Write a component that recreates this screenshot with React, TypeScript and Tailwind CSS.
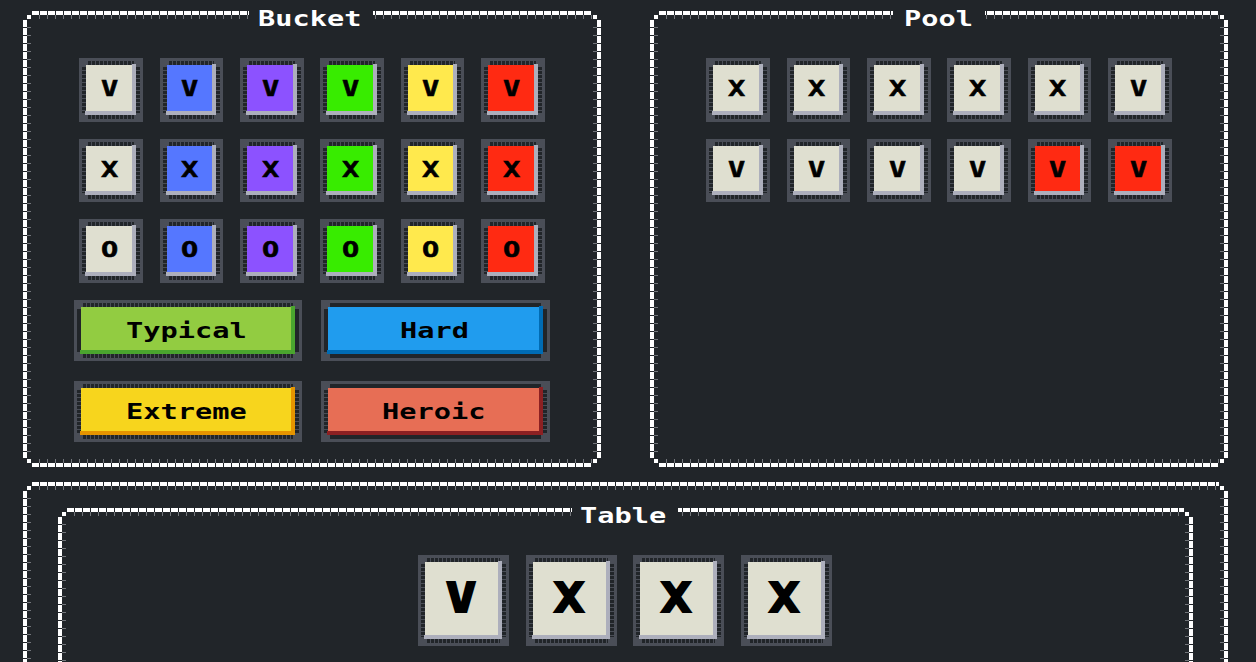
import type { ReactNode } from "react";

const mono = "font-['DejaVu_Sans_Mono',monospace] font-bold";

const faces: Record<string, string> = {
  white: "bg-[#dfdfd0]",
  blue: "bg-[#5577ff]",
  purple: "bg-[#8c52ff]",
  green: "bg-[#38ec00]",
  yellow: "bg-[#ffe94d]",
  red: "bg-[#ff2a12]",
};

const colors = ["white", "blue", "purple", "green", "yellow", "red"];

function HEdge() {
  return (
    <div className="absolute left-[9px] right-[9px] top-0 h-[8px]">
      <div className="h-[4px] bg-[repeating-linear-gradient(90deg,#ffffff_0_7px,#212529_7px_8px)]" />
      <div className="h-[4px] bg-[repeating-linear-gradient(90deg,transparent_0_7px,#73767b_7px_8px)]" />
    </div>
  );
}

function HEdgeBottom() {
  return (
    <div className="absolute left-[9px] right-[9px] bottom-0 h-[8px]">
      <div className="h-[4px] bg-[repeating-linear-gradient(90deg,transparent_0_7px,#73767b_7px_8px)]" />
      <div className="h-[4px] bg-[repeating-linear-gradient(90deg,#ffffff_0_7px,#212529_7px_8px)]" />
    </div>
  );
}

function VEdge({ side }: { side: "left" | "right" }) {
  return (
    <div className={`absolute top-[9px] bottom-[9px] w-[8px] flex ${side === "left" ? "left-0" : "right-0 flex-row-reverse"}`}>
      <div className="w-[4px] bg-[repeating-linear-gradient(180deg,#ffffff_0_7px,#212529_7px_8px)]" />
      <div className="w-[4px] bg-[repeating-linear-gradient(180deg,transparent_0_7px,#73767b_7px_8px)]" />
    </div>
  );
}

function Frame({ title, gapClass, className, children }: { title?: string; gapClass?: string; className: string; children: ReactNode }) {
  return (
    <div className={`relative ${className}`}>
      <HEdge />
      <HEdgeBottom />
      <VEdge side="left" />
      <VEdge side="right" />
      <div className="absolute left-[4px] top-[4px] size-[4px] bg-white" />
      <div className="absolute right-[4px] top-[4px] size-[4px] bg-white" />
      <div className="absolute left-[4px] bottom-[4px] size-[4px] bg-white" />
      <div className="absolute right-[4px] bottom-[4px] size-[4px] bg-white" />
      {title && (
        <div className="absolute -top-[4px] left-0 right-0 flex justify-center">
          <span className={`bg-[#212529] h-[16px] flex items-center justify-center text-white text-[22px] leading-none ${mono} ${gapClass}`}>
            <span className="mt-[8px] -ml-[2px] inline-block scale-x-[1.3]">{title}</span>
          </span>
        </div>
      )}
      {children}
    </div>
  );
}

const studsH = "bg-[repeating-linear-gradient(90deg,#212529_0_3px,#4a4e57_3px_4px)]";
const studsV = "bg-[repeating-linear-gradient(180deg,#212529_0_3px,#4a4e57_3px_4px)]";

// studded ring round a tile or a button, some of the strips come out solid
function Ring({ className, solidTop, solidSides, children }: { className: string; solidTop?: boolean; solidSides?: boolean; children: ReactNode }) {
  const top = solidTop ? "bg-[#212529]" : studsH;
  const side = solidSides ? "bg-[#212529]" : studsV;
  return (
    <div className={`relative bg-[#4a4e57] p-[7px] ${className}`}>
      <div className={`absolute left-[9px] right-[9px] top-[3px] h-[4px] ${top}`} />
      <div className={`absolute left-[9px] right-[9px] bottom-[3px] h-[4px] ${top}`} />
      <div className={`absolute left-[3px] top-[9px] bottom-[9px] w-[4px] ${side}`} />
      <div className={`absolute right-[3px] top-[9px] bottom-[9px] w-[4px] ${side}`} />
      {children}
    </div>
  );
}

function Shaded({ face, shade, children }: { face: string; shade: string; children: ReactNode }) {
  return (
    <div className={`relative size-full flex items-center justify-center ${face}`}>
      <div className={`absolute right-0 -top-[1px] bottom-0 w-[4px] ${shade}`} />
      <div className={`absolute -left-[1px] right-0 bottom-0 h-[4px] ${shade}`} />
      {children}
    </div>
  );
}

function Tile({ glyph, color = "white" }: { glyph: string; color?: string }) {
  return (
    <Ring className="size-[63.6px]">
      <Shaded face={faces[color]} shade="bg-[#adafbc]">
        <span className={`-mt-[1px] -ml-[3px] inline-block scale-x-[1.3] text-[22px] leading-none text-black [-webkit-text-stroke:0.5px_black] ${mono}`}>{glyph}</span>
      </Shaded>
    </Ring>
  );
}

function BigTile({ glyph }: { glyph: string }) {
  return (
    <Ring className="size-[91px]">
      <Shaded face={faces.white} shade="bg-[#adafbc]">
        <span className={`-mt-[6px] -ml-[4px] inline-block scale-x-[1.25] text-[40px] leading-none text-black [-webkit-text-stroke:2px_black] ${mono}`}>{glyph}</span>
      </Shaded>
    </Ring>
  );
}

function LevelButton({ label, width, face, shade, solidTop, solidSides }: { label: string; width: string; face: string; shade: string; solidTop?: boolean; solidSides?: boolean }) {
  return (
    <Ring className={`h-[61px] ${width}`} solidTop={solidTop} solidSides={solidSides}>
      <Shaded face={face} shade={shade}>
        <span className={`mt-[1px] -ml-[3px] inline-block scale-x-[1.3] text-[22px] leading-none text-black ${mono}`}>{label}</span>
      </Shaded>
    </Ring>
  );
}

export default function App() {
  return (
    <div className="h-[662px] overflow-hidden bg-[#212529] pl-[23px] pr-[28px] pt-[11px]">
      <div className="flex gap-[49px]">
        <Frame title="Bucket" gapClass="w-[124px] -ml-[2px]" className="w-[578px] h-[456px] pt-[47px]">
          <div className="grid grid-cols-[repeat(6,63.6px)] gap-x-[16.8px] gap-y-[17px] justify-center">
            {["V", "X", "O"].map((g) => colors.map((c) => <Tile key={g + c} glyph={g} color={c} />))}
          </div>
          <div className="mt-[17px] flex flex-col gap-[20px]">
            <div className="flex justify-center gap-[19px]">
              <LevelButton label="Typical" width="w-[228px]" face="bg-[#92cc41]" shade="bg-[#4aa52e]" solidSides />
              <LevelButton label="Hard" width="w-[229px]" face="bg-[#209cee]" shade="bg-[#006bb3]" solidTop solidSides />
            </div>
            <div className="flex justify-center gap-[19px]">
              <LevelButton label="Extreme" width="w-[228px]" face="bg-[#f7d51d]" shade="bg-[#e59400]" />
              <LevelButton label="Heroic" width="w-[229px]" face="bg-[#e76e55]" shade="bg-[#8c2022]" solidTop />
            </div>
          </div>
        </Frame>
        <Frame title="Pool" gapClass="w-[92px]" className="w-[578px] h-[456px] pt-[47px]">
          <div className="grid grid-cols-[repeat(6,63.6px)] gap-x-[16.8px] gap-y-[17px] justify-center">
            {["X", "X", "X", "X", "X", "V", "V", "V", "V", "V"].map((g, i) => <Tile key={i} glyph={g} />)}
            <Tile glyph="V" color="red" />
            <Tile glyph="V" color="red" />
          </div>
        </Frame>
      </div>
      <Frame className="mt-[15px] h-[400px] px-[35px] pt-[26px]">
        <Frame title="Table" gapClass="w-[106px] -ml-[2px]" className="h-[340px] pt-[47px]">
          <div className="flex justify-center gap-[16.5px] -ml-[1.5px]">
            <BigTile glyph="V" />
            <BigTile glyph="X" />
            <BigTile glyph="X" />
            <BigTile glyph="X" />
          </div>
        </Frame>
      </Frame>
    </div>
  );
}
